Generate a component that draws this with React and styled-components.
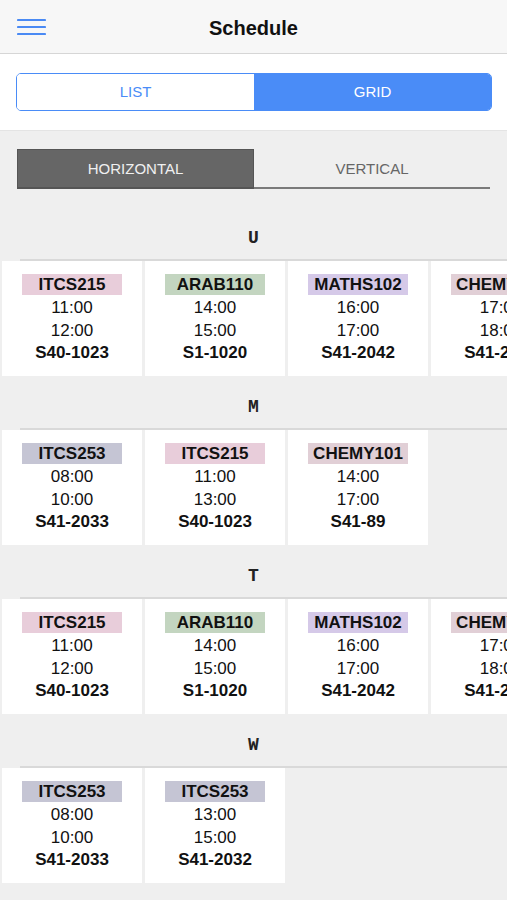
import React from "react";
import styled, { createGlobalStyle } from "styled-components";

const Global = createGlobalStyle`
  html, body { margin: 0; padding: 0; }
  body {
    background: #efefef;
    font-family: "Liberation Sans", Arial, sans-serif;
    color: #111;
    width: 507px;
    overflow-x: hidden;
  }
`;

const Page = styled.div`
  width: 507px;
  min-height: 900px;
  background: #efefef;
`;

const Header = styled.header`
  height: 53px;
  background: #f7f7f7;
  border-bottom: 1px solid #d6d6d6;
  display: grid;
  grid-template-columns: 80px 1fr 80px;
  align-items: center;
`;

const MenuButton = styled.div`
  padding-left: 17px;
  display: flex;
  align-items: center;
  height: 100%;
`;

const Title = styled.h1`
  margin: 0;
  padding-top: 3px;
  text-align: center;
  font-size: 20px;
  font-weight: 700;
  color: #111;
`;

const ViewBar = styled.div`
  background: #fff;
  padding: 19px 15px 19px 16px;
  border-bottom: 1px solid #e4e4e4;
`;

const Segmented = styled.div`
  display: grid;
  grid-template-columns: 1fr 1fr;
  height: 38px;
  border: 1.5px solid #4a8cf7;
  border-radius: 5px;
  overflow: hidden;
  box-sizing: border-box;
`;

const Segment = styled.div`
  display: flex;
  align-items: center;
  justify-content: center;
  font-size: 15px;
  padding-bottom: 1px;
  color: ${(p) => (p.$active ? "#fff" : "#4a8cf7")};
  background: ${(p) => (p.$active ? "#4a8cf7" : "#fff")};
`;

const OrientTabs = styled.div`
  display: grid;
  grid-template-columns: 237px 236px;
  margin: 18px 0 0 17px;
  height: 40px;
`;

const OrientTab = styled.div`
  display: flex;
  align-items: center;
  justify-content: center;
  font-size: 15px;
  box-sizing: border-box;
  color: ${(p) => (p.$active ? "#f0f0f0" : "#666")};
  background: ${(p) => (p.$active ? "#666" : "transparent")};
  border: ${(p) => (p.$active ? "1px solid #555" : "none")};
  border-bottom: 2px solid ${(p) => (p.$active ? "#555" : "#7a7a7a")};
`;

const Days = styled.div`
  padding-top: 18px;
`;

const DaySection = styled.section``;

const DayLabel = styled.div`
  padding: 21px 0 11px;
  line-height: 20px;
  text-align: center;
  font-family: "Liberation Mono", "Courier New", monospace;
  font-weight: 700;
  font-size: 18px;
  color: #222;
`;

const Divider = styled.div`
  margin-left: 20px;
  height: 2px;
  background: #d9d9d9;
`;

const CardRow = styled.div`
  display: flex;
  gap: 3px;
  padding-left: 2px;
  overflow: hidden;
`;

const Card = styled.div`
  flex: 0 0 140px;
  background: #fff;
  padding: 13px 0 12px;
  text-align: center;
  height: 115px;
  box-sizing: border-box;
`;

const Tag = styled.div`
  width: 100px;
  height: 21px;
  margin: 0 auto;
  line-height: 21px;
  font-size: 17px;
  font-weight: 700;
  color: #111;
  background: ${(p) => p.$color};
  white-space: nowrap;
  overflow: hidden;
`;

const Times = styled.div`
  margin-top: 2px;
`;

const Line = styled.div`
  line-height: 22.5px;
  font-size: 17px;
  font-weight: ${(p) => (p.$bold ? 700 : 400)};
  color: #111;
  white-space: nowrap;
`;

const COLORS = {
  ITCS215: "#e8cdda",
  ARAB110: "#c3d5c0",
  MATHS102: "#d5c9e8",
  CHEMY101: "#e1cfd6",
  ITCS253: "#c5c5d4",
};

const full = [
  ["ITCS215", "11:00", "12:00", "S40-1023"],
  ["ARAB110", "14:00", "15:00", "S1-1020"],
  ["MATHS102", "16:00", "17:00", "S41-2042"],
  ["CHEMY101", "17:00", "18:00", "S41-2033"],
];

const days = [
  { day: "U", items: full },
  {
    day: "M",
    items: [
      ["ITCS253", "08:00", "10:00", "S41-2033"],
      ["ITCS215", "11:00", "13:00", "S40-1023"],
      ["CHEMY101", "14:00", "17:00", "S41-89"],
    ],
  },
  { day: "T", items: full },
  {
    day: "W",
    items: [
      ["ITCS253", "08:00", "10:00", "S41-2033"],
      ["ITCS253", "13:00", "15:00", "S41-2032"],
    ],
  },
];

function Hamburger() {
  return (
    <svg width="29" height="18" viewBox="0 0 29 18">
      <g stroke="#4a8af4" strokeWidth="2.2" strokeLinecap="round">
        <line x1="1" y1="2" x2="28" y2="2" />
        <line x1="1" y1="9" x2="28" y2="9" />
        <line x1="1" y1="16" x2="28" y2="16" />
      </g>
    </svg>
  );
}

export default function App() {
  return (
    <Page>
      <Global />
      <Header>
        <MenuButton>
          <Hamburger />
        </MenuButton>
        <Title>Schedule</Title>
        <div />
      </Header>
      <ViewBar>
        <Segmented>
          <Segment>LIST</Segment>
          <Segment $active>GRID</Segment>
        </Segmented>
      </ViewBar>
      <OrientTabs>
        <OrientTab $active>HORIZONTAL</OrientTab>
        <OrientTab>VERTICAL</OrientTab>
      </OrientTabs>
      <Days>
        {days.map((d) => (
          <DaySection key={d.day}>
            <DayLabel>{d.day}</DayLabel>
            <Divider />
            <CardRow>
              {d.items.map(([code, start, end, room], i) => (
                <Card key={i}>
                  <Tag $color={COLORS[code]}>{code}</Tag>
                  <Times>
                    <Line>{start}</Line>
                    <Line>{end}</Line>
                    <Line $bold>{room}</Line>
                  </Times>
                </Card>
              ))}
            </CardRow>
          </DaySection>
        ))}
      </Days>
    </Page>
  );
}
